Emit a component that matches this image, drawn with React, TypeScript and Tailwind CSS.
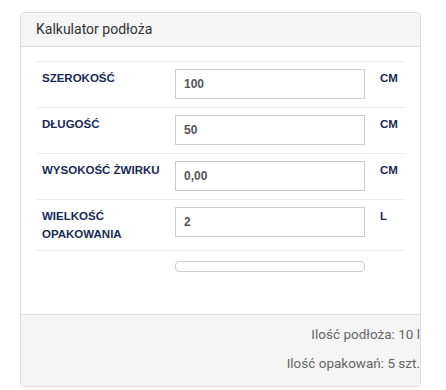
import { useState } from "react";

const rows = [
  { label: "SZEROKOŚĆ", value: "100", unit: "CM" },
  { label: "DŁUGOŚĆ", value: "50", unit: "CM" },
  { label: "WYSOKOŚĆ ŻWIRKU", value: "0,00", unit: "CM" },
  { label: "WIELKOŚĆ OPAKOWANIA", value: "2", unit: "L" },
];

export default function App() {
  const [values, setValues] = useState(rows.map((r) => r.value));

  return (
    <div className="w-[446px] h-[390px] bg-white pt-3 pl-5 font-['Roboto',sans-serif]">
      <div className="w-[401px] rounded border border-[#ddd] overflow-hidden">
        {/* Header */}
        <div className="h-[34px] bg-[#f5f5f5] border-b border-[#ddd] px-[15px] flex items-center text-[14px] text-[#333]">
          Kalkulator podłoża
        </div>

        {/* Body */}
        <div className="px-[15px] pt-[14px] h-[267px] font-['Liberation_Sans',Arial,sans-serif]">
          {rows.map((row, i) => (
            <div key={row.label} className="flex border-t border-[#eee] pt-[7px] pb-[4px]">
              <div className="w-[133px] pl-[6px] pr-[4px] pb-[3px] text-[11.5px] leading-[18px] font-bold text-[#1a2a55]">
                {row.label}
              </div>
              <div className="w-[202px] px-[6px] pb-[4px]">
                <input
                  value={values[i]}
                  onChange={(e) => {
                    const next = [...values];
                    next[i] = e.target.value;
                    setValues(next);
                  }}
                  className="w-[190px] h-[30px] border border-[#ccc] px-2 text-[12px] font-bold text-[#555] outline-none"
                />
              </div>
              <div className="pl-[9px] text-[11.5px] leading-[18px] font-bold text-[#1a2a55]">
                {row.unit}
              </div>
            </div>
          ))}
          <div className="flex border-t border-[#eee] pt-[10px]">
            <div className="w-[133px]" />
            <div className="px-[6px]">
              <div className="w-[190px] h-[11px] rounded border border-[#ccc]" />
            </div>
          </div>
        </div>

        {/* Footer */}
        <div className="bg-[#f5f5f5] border-t border-[#ddd] h-[72px] pt-[9px] text-right text-[13.5px] leading-[20px] text-[#666]">
          <div>Ilość podłoża: 10 l</div>
          <div className="mt-[9px]">Ilość opakowań: 5 szt.</div>
        </div>
      </div>
    </div>
  );
}
